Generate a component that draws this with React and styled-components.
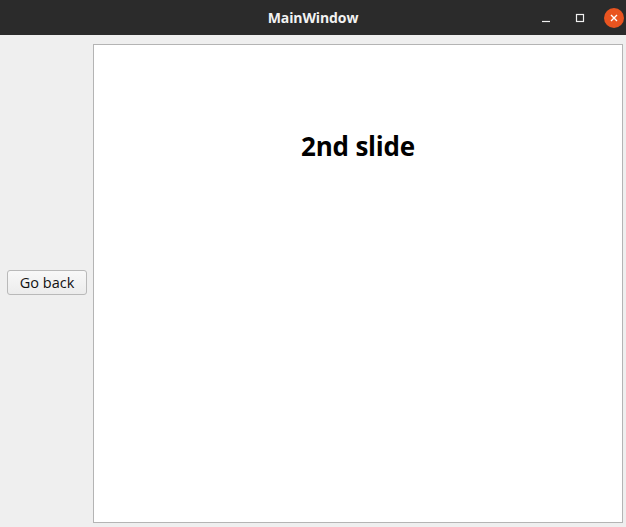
import styled, { createGlobalStyle } from "styled-components";

const GlobalStyle = createGlobalStyle`
  html, body {
    margin: 0;
    padding: 0;
    background: #efefef;
  }
  body {
    font-family: "Open Sans", "Noto Sans", sans-serif;
  }
`;

const Window = styled.div`
  width: 626px;
  height: 527px;
  display: flex;
  flex-direction: column;
  background: #efefef;
  overflow: hidden;
`;

const TitleBar = styled.div`
  height: 35px;
  flex: none;
  background: #2b2b2b;
  display: grid;
  grid-template-columns: 1fr auto 1fr;
  align-items: center;
`;

const Title = styled.div`
  grid-column: 2;
  color: #f2f2f2;
  font-weight: 700;
  font-size: 14px;
  letter-spacing: -0.1px;
`;

const Controls = styled.div`
  grid-column: 3;
  justify-self: end;
  display: flex;
  align-items: center;
  padding-right: 2px;
`;

const ControlButton = styled.div`
  width: 34px;
  height: 20px;
  display: flex;
  align-items: center;
  justify-content: center;
`;

const CloseButton = styled.div`
  width: 20px;
  height: 20px;
  border-radius: 50%;
  background: #e95420;
  display: flex;
  align-items: center;
  justify-content: center;
  margin-left: 7px;
`;

const Body = styled.div`
  flex: 1;
  display: flex;
  align-items: stretch;
  padding: 9px 3px 4px 7px;
  gap: 6px;
`;

const Side = styled.div`
  display: flex;
  align-items: center;
  padding-bottom: 2px;
`;

const Button = styled.button`
  width: 80px;
  height: 25px;
  background: linear-gradient(#f8f8f8, #ececec);
  border: 1px solid #b9b9b9;
  border-radius: 3px;
  font-family: "Open Sans", "Noto Sans", sans-serif;
  font-size: 14.5px;
  color: #111;
  padding: 0;
`;

const Slide = styled.div`
  flex: 1;
  background: #fff;
  border: 1px solid #b4b4b4;
  display: flex;
  justify-content: center;
  align-items: flex-start;
`;

const Heading = styled.h1`
  margin: 83px 0 0;
  font-size: 26px;
  font-weight: 700;
  color: #000;
  letter-spacing: -0.2px;
`;

export default function App() {
  return (
    <>
      <GlobalStyle />
      <Window>
        <TitleBar>
          <Title>MainWindow</Title>
          <Controls>
            <ControlButton>
              <svg width="10" height="10" viewBox="0 0 10 10">
                <path d="M1 8.5h8" stroke="#f0f0f0" strokeWidth="1.2" />
              </svg>
            </ControlButton>
            <ControlButton>
              <svg width="10" height="10" viewBox="0 0 10 10">
                <rect x="1.5" y="1.5" width="7" height="7" fill="none" stroke="#f0f0f0" strokeWidth="1.2" />
              </svg>
            </ControlButton>
            <CloseButton>
              <svg width="10" height="10" viewBox="0 0 10 10">
                <path d="M2 2l6 6M8 2l-6 6" stroke="#fff" strokeWidth="1.4" />
              </svg>
            </CloseButton>
          </Controls>
        </TitleBar>
        <Body>
          <Side>
            <Button>Go back</Button>
          </Side>
          <Slide>
            <Heading>2nd slide</Heading>
          </Slide>
        </Body>
      </Window>
    </>
  );
}
